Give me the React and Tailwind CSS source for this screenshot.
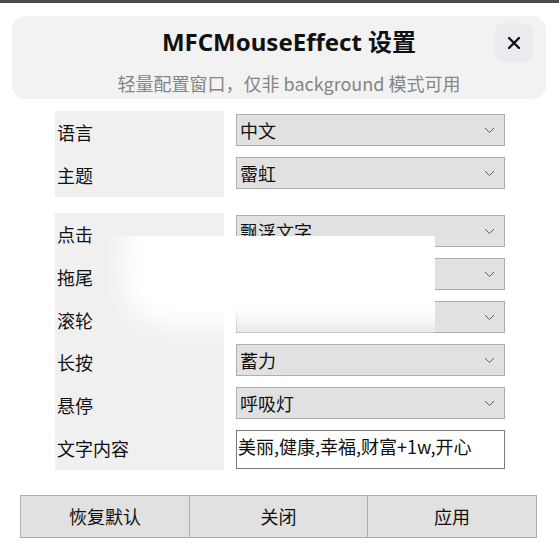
import React from "react";

const Chevron = () => (
  <svg width="11" height="7" viewBox="0 0 11 7" className="shrink-0">
    <path d="M1 1 L5.5 5.5 L10 1" fill="none" stroke="#606060" strokeWidth="1" />
  </svg>
);

const Select = ({ value }) => (
  <div className="h-[32px] bg-[#e1e1e1] border border-[#adadad] flex items-center pl-[3px] pr-[9px]">
    <span className="flex-1 text-[18px] leading-[20px] text-[#111]">{value}</span>
    <Chevron />
  </div>
);

const Label = ({ children }) => (
  <div className="h-[43px] flex items-center pl-[2px] text-[18px] text-[#111]">{children}</div>
);

const App = () => {
  return (
    <div className="relative w-[559px] h-[560px] bg-white overflow-hidden font-['Noto_Sans_CJK_SC','Noto_Sans',sans-serif]">
      <div className="h-[3px] bg-[#4a4a4a]" />

      {/* header */}
      <div className="mt-[13px] mx-[12px] w-[534px] h-[83px] rounded-[14px] bg-[#f2f2f2] flex pl-[77px] pr-[13px] pt-[7px]">
        <div className="flex-1 flex flex-col items-center">
          <div className="font-['Noto_Sans','Noto_Sans_CJK_SC',sans-serif] font-bold text-[24px] leading-[36px] text-[#111]">
            MFCMouseEffect <span className="font-['Noto_Sans_CJK_SC',sans-serif]">设置</span>
          </div>
          <div className="text-[18px] leading-[24px] text-[#858585] mt-[11px]">
            轻量配置窗口，仅非 background 模式可用
          </div>
        </div>
        <button className="w-[38px] h-[39px] rounded-[9px] bg-[#ebebf0] flex items-center justify-center ml-[6px]">
          <svg width="12" height="12" viewBox="0 0 12 12">
            <path d="M1 1 L11 11 M11 1 L1 11" stroke="#111" strokeWidth="2.4" strokeLinecap="round" />
          </svg>
        </button>
      </div>

      {/* group 1 */}
      <div className="flex ml-[55px] mt-[12px]">
        <div className="w-[169px] bg-[#f0f0f0] flex flex-col">
          <Label>语言</Label>
          <Label>主题</Label>
        </div>
        <div className="w-[269px] ml-[12px] pt-[3px] flex flex-col gap-[11px]">
          <Select value="中文" />
          <Select value="霤虹" />
        </div>
      </div>

      {/* group 2 */}
      <div className="flex ml-[55px] mt-[16px]">
        <div className="w-[169px] h-[257px] bg-[#f0f0f0] flex flex-col">
          <Label>点击</Label>
          <Label>拖尾</Label>
          <Label>滚轮</Label>
          <Label>长按</Label>
          <Label>悬停</Label>
          <Label>文字内容</Label>
        </div>
        <div className="w-[269px] ml-[12px] pt-[2px] flex flex-col gap-[11px]">
          <Select value="飘浮文字" />
          <Select value="" />
          <Select value="" />
          <Select value="蓄力" />
          <Select value="呼吸灯" />
          <div className="h-[39px] bg-white border border-[#7a7a7a] pl-[1px] pt-[3px] text-[18px] leading-[24px] text-[#111]">
            美丽,健康,幸福,财富+1w,开心
          </div>
        </div>
      </div>

      {/* buttons */}
      <div className="flex ml-[20px] mt-[25px] h-[43px] text-[18px] text-[#111]">
        <button className="w-[170px] bg-[#e1e1e1] border border-[#adadad]">恢复默认</button>
        <button className="w-[178px] bg-[#e1e1e1] border-y border-r border-[#adadad]">关闭</button>
        <button className="w-[169px] bg-[#e1e1e1] border-y border-r border-[#adadad]">应用</button>
      </div>

      {/* redaction blur over content */}
      <div className="absolute left-[95px] top-[236px] w-[340px] h-[110px] overflow-hidden">
        <div className="absolute left-[28px] top-[-30px] w-[360px] h-[120px] rounded-[45px] bg-white blur-[12px]" />
      </div>
    </div>
  );
};

export default App;
